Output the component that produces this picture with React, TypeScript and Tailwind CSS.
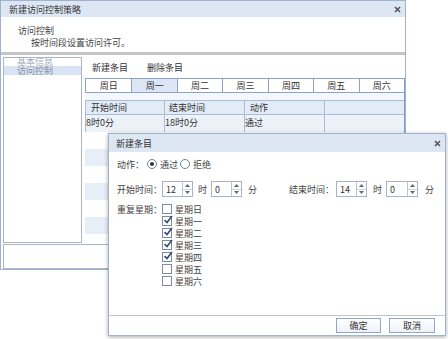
const days = ["周日", "周一", "周二", "周三", "周四", "周五", "周六"];
const weekChecks = [
  { label: "星期日", checked: false },
  { label: "星期一", checked: true },
  { label: "星期二", checked: true },
  { label: "星期三", checked: true },
  { label: "星期四", checked: true },
  { label: "星期五", checked: false },
  { label: "星期六", checked: false },
];

function CloseX() {
  return (
    <svg width="7" height="7" viewBox="0 0 7 7" className="text-[#555]">
      <path d="M1 1L6 6M6 1L1 6" stroke="currentColor" strokeWidth="1.6" />
    </svg>
  );
}

function SpinBox({ value, width = "w-[31px]" }: { value: string; width?: string }) {
  return (
    <div className={`flex h-[16px] shrink-0 ${width} border border-[#a3b4cc] bg-white`}>
      <div className="flex flex-1 items-center pl-[3px] text-[9px] text-[#333]">{value}</div>
      <div className="flex w-[10px] flex-col border-l border-[#b9c6d8]">
        <div className="flex flex-1 items-center justify-center border-b border-[#c9d3e1]">
          <svg width="5" height="3" viewBox="0 0 5 3">
            <path d="M0 3L2.5 0L5 3Z" fill="#666" />
          </svg>
        </div>
        <div className="flex flex-1 items-center justify-center">
          <svg width="5" height="3" viewBox="0 0 5 3">
            <path d="M0 0L2.5 3L5 0Z" fill="#666" />
          </svg>
        </div>
      </div>
    </div>
  );
}

function Radio({ checked }: { checked: boolean }) {
  return (
    <span className="flex h-[10px] w-[10px] shrink-0 items-center justify-center rounded-full border border-[#6f7f96] bg-white">
      {checked && <span className="h-[4px] w-[4px] rounded-full bg-[#333]" />}
    </span>
  );
}

function CheckBox({ checked }: { checked: boolean }) {
  return (
    <span className="relative h-[10px] w-[10px] shrink-0 border border-[#7c8ba1] bg-white">
      {checked && (
        <svg width="10" height="10" viewBox="0 0 10 10" className="absolute left-[0px] top-[-2px]">
          <path d="M1.5 5L4 7.5L9 1" stroke="#2d4a78" strokeWidth="1.6" fill="none" />
        </svg>
      )}
    </span>
  );
}

export default function App() {
  return (
    <div className="relative h-[339px] w-[448px] overflow-hidden whitespace-nowrap bg-white font-['Noto_Sans_CJK_SC',sans-serif] text-[9px] leading-none text-[#333]">
      {/* main window */}
      <div className="flex h-[270px] w-[406px] flex-col border border-[#9fb3d1] bg-white">
        <div className="flex h-[16px] shrink-0 items-center justify-between bg-[#dde7f4] pl-[8px] pr-[4px]">
          <span>新建访问控制策略</span>
          <CloseX />
        </div>
        <div className="flex h-[35px] shrink-0 flex-col gap-[3px] pl-[17px] pt-[9px] text-[#444]">
          <span>访问控制</span>
          <span className="pl-[13px]">按时间段设置访问许可。</span>
        </div>
        <div className="h-[3px] shrink-0 bg-[#c6c6c6]" />
        <div className="flex h-[188px] shrink-0 gap-[3px] pl-[2px] pt-[2px]">
          <div className="w-[79px] shrink-0 border border-[#a9b6c9] bg-white">
            <div className="h-[8px] pl-[13px] leading-[7px] text-[#a3acbd]">基本信息</div>
            <div className="h-[9px] bg-[#d8e3f3] pl-[13px] leading-[9px] text-[#8491a8]">访问控制</div>
          </div>
          <div className="flex min-h-0 flex-1 flex-col">
            <div className="flex h-[21px] shrink-0 items-center gap-[19px] pl-[7px]">
              <span>新建条目</span>
              <span>删除条目</span>
            </div>
            <div className="flex min-h-0 flex-1 flex-col border-r border-[#7f9cc8]">
              <div className="grid h-[15px] shrink-0 grid-cols-7 border border-r-0 border-[#8ba3c9]">
                {days.map((d, i) => (
                  <div
                    key={d}
                    className={`flex items-center justify-center ${i > 0 ? "border-l border-[#8ba3c9]" : ""} ${
                      i === 1 ? "bg-[#dce6f4]" : "bg-white"
                    }`}
                  >
                    {d}
                  </div>
                ))}
              </div>
              <div className="h-[7px] shrink-0 bg-[#f4f7fc]" />
              <div className="grid h-[15px] shrink-0 grid-cols-[79px_80px_80px_1fr] border-y border-[#a9bcd9] bg-[#e3ebf6]">
                <div className="flex items-center border-l border-[#a9bcd9] pl-[5px]">开始时间</div>
                <div className="flex items-center border-l border-[#a9bcd9] pl-[4px]">结束时间</div>
                <div className="flex items-center border-l border-[#a9bcd9] pl-[5px]">动作</div>
                <div className="border-l border-[#a9bcd9]" />
              </div>
              <div className="grid h-[17px] shrink-0 grid-cols-[79px_80px_80px_1fr] bg-[#edf2f9]">
                <div className="border-l border-[#a9bcd9] pt-[3px]">8时0分</div>
                <div className="border-l border-[#a9bcd9] pt-[3px]">18时0分</div>
                <div className="border-l border-[#a9bcd9] pt-[3px]">通过</div>
                <div className="border-l border-[#a9bcd9]" />
              </div>
              <div className="flex min-h-0 flex-1 flex-col overflow-hidden">
                {[0, 1, 2, 3, 4, 5, 6].map((r) => (
                  <div key={r} className={`h-[17px] shrink-0 ${r % 2 === 0 ? "bg-white" : "bg-[#e8eef8]"}`} />
                ))}
              </div>
            </div>
          </div>
        </div>
        <div className="mx-[2px] mt-[1px] h-[25px] shrink-0 border border-[#a9b6c9] bg-white" />
      </div>

      {/* dialog */}
      <div className="absolute left-[108px] top-[133px] flex h-[203px] w-[338px] flex-col border border-[#9fb3d1] bg-white shadow-[0_1px_4px_rgba(0,0,0,0.35)]">
        <div className="flex h-[18px] shrink-0 items-center justify-between bg-[#dde7f4] pl-[7px] pr-[4px]">
          <span>新建条目</span>
          <CloseX />
        </div>
        <div className="flex min-h-0 flex-1 flex-col pl-[8px] text-[#444]">
          <div className="mt-[5px] flex h-[14px] items-center">
            <span className="w-[30px]">动作：</span>
            <Radio checked />
            <span className="ml-[3px] w-[20px]">通过</span>
            <Radio checked={false} />
            <span className="ml-[3px]">拒绝</span>
          </div>
          <div className="mt-[10px] flex h-[16px] items-center">
            <span className="w-[45px]">开始时间：</span>
            <SpinBox value="12" />
            <span className="ml-[5px] w-[11px]">时</span>
            <span className="ml-[2px]">
              <SpinBox value="0" />
            </span>
            <span className="ml-[6px] w-[11px]">分</span>
            <span className="ml-[30px] w-[47px]">结束时间：</span>
            <SpinBox value="14" />
            <span className="ml-[6px] w-[11px]">时</span>
            <span className="ml-[2px]">
              <SpinBox value="0" width="w-[32px]" />
            </span>
            <span className="ml-[7px]">分</span>
          </div>
          <div className="mt-[6px] flex">
            <span className="w-[45px] pt-[2px]">重复星期：</span>
            <div className="flex flex-col">
              {weekChecks.map((w) => (
                <div key={w.label} className="flex h-[12px] items-center gap-[3px]">
                  <CheckBox checked={w.checked} />
                  <span>{w.label}</span>
                </div>
              ))}
            </div>
          </div>
        </div>
        <div className="flex h-[20px] shrink-0 items-center justify-end gap-[8px] border-t border-[#c4c4c4] pr-[10px]">
          <button className="flex h-[15px] w-[45px] items-center justify-center border border-[#90a6c8] bg-gradient-to-b from-white to-[#edf1f7] text-[9px] text-[#333]">
            确定
          </button>
          <button className="flex h-[15px] w-[46px] items-center justify-center border border-[#90a6c8] bg-gradient-to-b from-white to-[#edf1f7] text-[9px] text-[#333]">
            取消
          </button>
        </div>
      </div>
    </div>
  );
}
